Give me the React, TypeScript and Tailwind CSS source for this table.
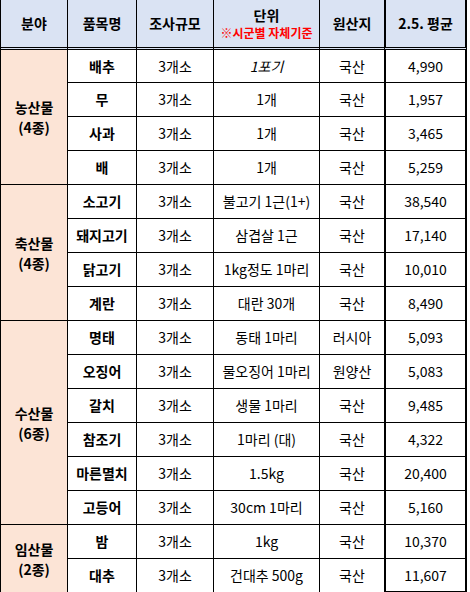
import React from "react";

type Row = { name: string; size: string; unit: string; italic?: boolean; origin: string; avg: string };
type Group = { cat: string; count: string; rows: Row[] };

const groups: Group[] = [
  {
    cat: "농산물",
    count: "(4종)",
    rows: [
      { name: "배추", size: "3개소", unit: "1포기", italic: true, origin: "국산", avg: "4,990" },
      { name: "무", size: "3개소", unit: "1개", origin: "국산", avg: "1,957" },
      { name: "사과", size: "3개소", unit: "1개", origin: "국산", avg: "3,465" },
      { name: "배", size: "3개소", unit: "1개", origin: "국산", avg: "5,259" },
    ],
  },
  {
    cat: "축산물",
    count: "(4종)",
    rows: [
      { name: "소고기", size: "3개소", unit: "불고기 1근(1+)", origin: "국산", avg: "38,540" },
      { name: "돼지고기", size: "3개소", unit: "삼겹살 1근", origin: "국산", avg: "17,140" },
      { name: "닭고기", size: "3개소", unit: "1kg정도 1마리", origin: "국산", avg: "10,010" },
      { name: "계란", size: "3개소", unit: "대란 30개", origin: "국산", avg: "8,490" },
    ],
  },
  {
    cat: "수산물",
    count: "(6종)",
    rows: [
      { name: "명태", size: "3개소", unit: "동태 1마리", origin: "러시아", avg: "5,093" },
      { name: "오징어", size: "3개소", unit: "물오징어 1마리", origin: "원양산", avg: "5,083" },
      { name: "갈치", size: "3개소", unit: "생물 1마리", origin: "국산", avg: "9,485" },
      { name: "참조기", size: "3개소", unit: "1마리 (대)", origin: "국산", avg: "4,322" },
      { name: "마른멸치", size: "3개소", unit: "1.5kg", origin: "국산", avg: "20,400" },
      { name: "고등어", size: "3개소", unit: "30cm 1마리", origin: "국산", avg: "5,160" },
    ],
  },
  {
    cat: "임산물",
    count: "(2종)",
    rows: [
      { name: "밤", size: "3개소", unit: "1kg", origin: "국산", avg: "10,370" },
      { name: "대추", size: "3개소", unit: "건대추 500g", origin: "국산", avg: "11,607" },
    ],
  },
];

const spanClass: Record<number, string> = {
  2: "row-span-2",
  4: "row-span-4",
  6: "row-span-6",
};

const hdr = "bg-[#dae3f3] border-b-[3px] border-double border-black flex items-center justify-center font-bold text-[14px]";
const cell = "flex items-center justify-center border-b border-black text-[14px] whitespace-nowrap";

export default function App() {
  const total = groups.reduce((a, g) => a + g.rows.length, 0);
  let idx = 0;
  return (
    <div className="w-[470px] h-[592px] overflow-hidden bg-white font-['Noto_Sans_CJK_KR','Noto_Sans',sans-serif] text-black">
      <div className="grid grid-cols-[67px_69px_77px_106px_64px_83px] grid-rows-[50px_33px_repeat(15,34px)] w-[467px] border-l border-black">
        <div className={`${hdr} border-r border-black`}>분야</div>
        <div className={`${hdr} border-r border-black`}>품목명</div>
        <div className={`${hdr} border-r border-black`}>조사규모</div>
        <div className={`${hdr} border-r border-black flex-col leading-[18px]`}>
          <span>단위</span>
          <span className="text-[12px] text-[#ff0000] leading-[17px]">※시군별 자체기준</span>
        </div>
        <div className={hdr}>원산지</div>
        <div className={`${hdr} border-l-2 border-r-2`}>2.5. 평균</div>
        {groups.map((g) =>
          g.rows.map((r, i) => {
            idx += 1;
            const last = idx === total;
            return (
              <React.Fragment key={g.cat + r.name}>
                {i === 0 && (
                  <div
                    className={`${spanClass[g.rows.length]} bg-[#fce4d6] border-r border-b border-black flex flex-col items-center justify-center font-bold text-[14px] leading-[20px]`}
                  >
                    <span>{g.cat}</span>
                    <span>{g.count}</span>
                  </div>
                )}
                <div className={`${cell} border-r font-bold`}>{r.name}</div>
                <div className={`${cell} border-r`}>{r.size}</div>
                <div className={`${cell} border-r ${r.italic ? "italic" : ""}`}>{r.unit}</div>
                <div className={cell}>{r.origin}</div>
                <div className={`${cell} border-l-2 border-r-2 ${last ? "border-b-2" : ""}`}>{r.avg}</div>
              </React.Fragment>
            );
          })
        )}
      </div>
    </div>
  );
}
